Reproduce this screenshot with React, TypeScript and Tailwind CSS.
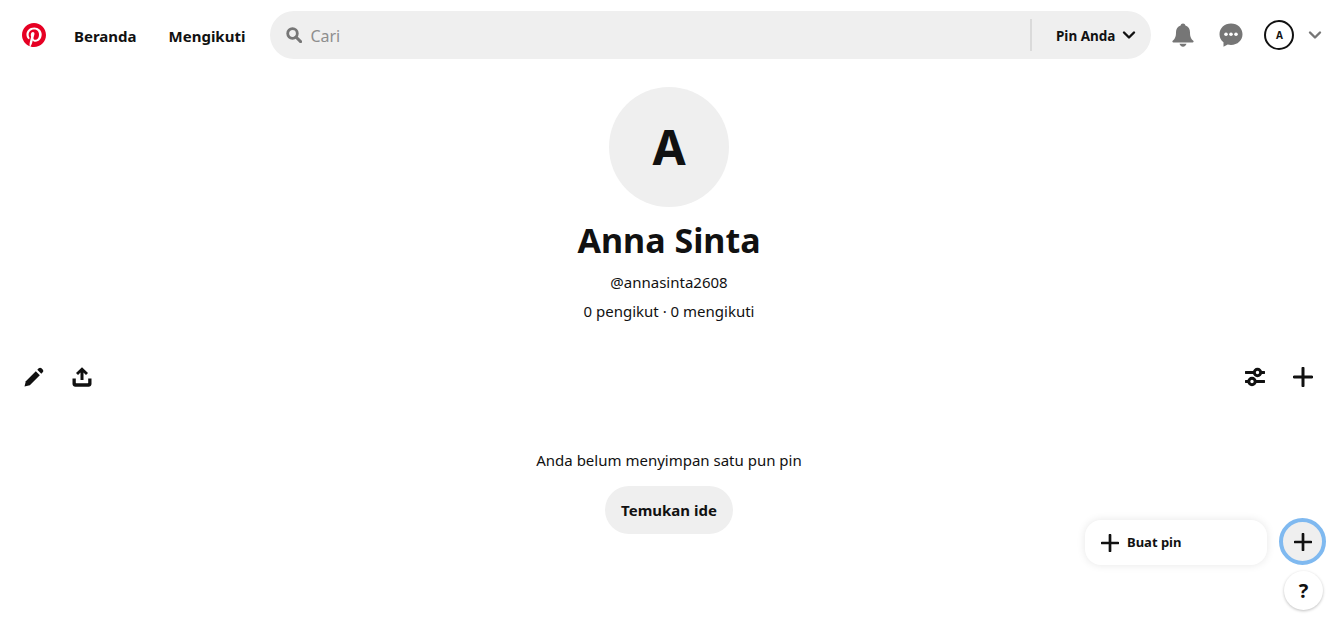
function PinterestLogo() {
    return (
        <svg className="w-6 h-6 shrink-0" viewBox="0 0 24 24" fill="#e60023">
            <path d="M0 12c0 5.123 3.211 9.497 7.73 11.218-.11-.937-.227-2.482.025-3.566.217-.932 1.401-5.938 1.401-5.938s-.357-.715-.357-1.774c0-1.66.962-2.899 2.161-2.899 1.02 0 1.512.765 1.512 1.682 0 1.025-.653 2.557-.99 3.978-.281 1.189.597 2.159 1.769 2.159 2.123 0 3.756-2.239 3.756-5.471 0-2.861-2.056-4.86-4.991-4.86-3.398 0-5.393 2.549-5.393 5.184 0 1.027.395 2.127.889 2.726a.36.36 0 0 1 .083.343c-.091.378-.293 1.189-.332 1.355-.053.218-.173.265-.4.159-1.492-.694-2.424-2.875-2.424-4.627 0-3.769 2.737-7.229 7.892-7.229 4.144 0 7.365 2.953 7.365 6.899 0 4.117-2.595 7.431-6.199 7.431-1.211 0-2.348-.63-2.738-1.373 0 0-.599 2.282-.744 2.84-.282 1.084-1.064 2.456-1.549 3.235C9.584 23.815 10.77 24 12 24c6.627 0 12-5.373 12-12S18.627 0 12 0 0 5.373 0 12" />
        </svg>
    );
}

function SearchIcon() {
    return (
        <svg className="w-4 h-4 shrink-0" viewBox="0 0 16 16" fill="none" stroke="#767676">
            <circle cx="6.5" cy="6.5" r="4.8" strokeWidth="2.8" />
            <path d="M10 10l4.6 4.6" strokeWidth="3" strokeLinecap="round" />
        </svg>
    );
}

function Chevron({ color }: { color: string }) {
    return (
        <svg className="w-[14px] h-[10px] shrink-0" viewBox="0 0 14 10" fill="none" stroke={color}>
            <path d="M2 2.500l5 5 5-5" strokeWidth="2.400" strokeLinecap="round" strokeLinejoin="round" />
        </svg>
    );
}

function BellIcon() {
    return (
        <svg className="w-6 h-6 shrink-0" viewBox="0 0 24 24" fill="#767676">
            <path d="M12 0.500c-1.300 0-2.200.9-2.400 2.100C6.600 3.600 5 6.100 5 9.300c0 4.500-.9 6.300-3.300 8.500-.7.7-.3 1.700.7 1.700h19.200c1 0 1.400-1 .7-1.700C19.900 15.600 19 13.800 19 9.300c0-3.200-1.600-5.700-4.600-6.700C14.200 1.400 13.300.5 12 .5z" />
            <path d="M8.500 20.800h7c-.3 1.500-1.800 2.900-3.500 2.900s-3.200-1.400-3.500-2.900z" />
        </svg>
    );
}

function ChatIcon() {
    return (
        <svg className="w-6 h-6 shrink-0" viewBox="0 0 24 24">
            <path fill="#767676" d="M12 .5C5.400.5.500 5.200.500 11.200c0 3.300 1.500 6.200 4 8.100v4.400l4.200-2.300c1 .3 2.100.5 3.300.5 6.600 0 11.500-4.700 11.500-10.700S18.600.5 12 .5z" />
            <circle cx="7" cy="11.300" r="1.800" fill="#fff" />
            <circle cx="12" cy="11.300" r="1.800" fill="#fff" />
            <circle cx="17" cy="11.300" r="1.800" fill="#fff" />
        </svg>
    );
}

function PencilIcon() {
    return (
        <svg className="w-5 h-5 shrink-0" viewBox="0 0 20 20" fill="#111">
            <path d="M0.500 19.500l1.300-5.300L11.800 4.200l4 4L5.800 18.200z" />
            <path d="M13.300 2.700l1.400-1.400c.8-.8 2-.8 2.800 0l1.200 1.200c.8.8.8 2 0 2.800l-1.400 1.400z" />
        </svg>
    );
}

function ShareIcon() {
    return (
        <svg className="w-5 h-5 shrink-0" viewBox="0 0 20 20" fill="#111">
            <path d="M10 .2l6 5.800-2 2-2.500-2.400v7.400h-3V5.600L6 8 4 6z" />
            <path d="M.500 11.500h3.300v4.300c0 .3.200.5.500.5h11.400c.3 0 .5-.2.500-.5v-4.300h3.300v5.500c0 1.600-1.300 2.800-2.800 2.800H3.300c-1.500 0-2.800-1.200-2.800-2.800z" />
        </svg>
    );
}

function FilterIcon() {
    return (
        <svg className="w-5 h-5 shrink-0" viewBox="0 0 20 20" fill="none" stroke="#111">
            <path d="M0.800 5.500h18.400M0.800 14.500h18.400" strokeWidth="3" strokeLinecap="round" />
            <circle cx="12.500" cy="5.500" r="3.200" fill="#fff" strokeWidth="3" />
            <circle cx="7" cy="14.500" r="3.200" fill="#fff" strokeWidth="3" />
        </svg>
    );
}

function PlusIcon({ size }: { size: string }) {
    return (
        <svg className={size} viewBox="0 0 20 20" fill="none" stroke="#111">
            <path d="M10 1.200v17.600M1.200 10h17.600" strokeWidth="3" strokeLinecap="round" />
        </svg>
    );
}

export default function App() {
    return (
        <div className="relative w-[1338px] h-[622px] bg-white text-[#111] font-['Noto_Sans','Open_Sans',sans-serif] overflow-hidden">
            {/* Header */}
            <header className="flex items-center h-[70px] pl-[22px]">
                <PinterestLogo />
                <nav className="flex items-center ml-[28px] gap-8 pt-[2px] text-[15px] font-bold">
                    <span>Beranda</span>
                    <span>Mengikuti</span>
                </nav>
                <div className="flex items-center shrink-0 ml-[25px] w-[881px] h-12 rounded-3xl bg-[#efefef] pl-4 pr-[15px]">
                    <SearchIcon />
                    <span className="ml-2 pt-px text-[16px] text-[#8e8e8e]">Cari</span>
                    <div className="ml-auto flex items-center h-8 border-l-2 border-[#dadada] pl-6 gap-[7px] text-[13.5px] font-bold">
                        <span className="pt-[2px]">Pin Anda</span>
                        <Chevron color="#111" />
                    </div>
                </div>
                <div className="flex items-center ml-5 gap-6">
                    <BellIcon />
                    <ChatIcon />
                    <div className="flex items-center justify-center -ml-[3px] w-[30px] h-[30px] rounded-full border-2 border-[#111] text-[10px] font-bold">A</div>
                </div>
                <div className="ml-[14px]">
                    <Chevron color="#767676" />
                </div>
            </header>

            {/* Profile */}
            <section className="flex flex-col items-center pt-[17px]">
                <div className="flex items-center justify-center w-[120px] h-[120px] rounded-full bg-[#efefef] text-[48px] font-bold leading-none">A</div>
                <h1 className="mt-[9px] text-[34px] leading-[48px] font-bold">Anna Sinta</h1>
                <p className="mt-[6px] text-[15px] leading-[24px]">@annasinta2608</p>
                <p className="mt-[5px] text-[15px] leading-[24px]">0 pengikut · 0 mengikuti</p>
            </section>

            {/* Toolbar */}
            <div className="flex items-center justify-between mt-[44px] pl-[24px] pr-[25px]">
                <div className="flex items-center gap-7">
                    <PencilIcon />
                    <ShareIcon />
                </div>
                <div className="flex items-center gap-7">
                    <FilterIcon />
                    <PlusIcon size="w-5 h-5" />
                </div>
            </div>

            {/* Empty state */}
            <section className="flex flex-col items-center mt-[61px]">
                <p className="text-[15px] leading-[24px]">Anda belum menyimpan satu pun pin</p>
                <button className="mt-[14px] h-12 px-4 pt-px rounded-3xl bg-[#efefef] text-[15px] font-bold">Temukan ide</button>
            </section>

            {/* Floating */}
            <div className="absolute left-[1085px] top-[520px] flex items-center w-[182px] h-[45px] pl-4 gap-2 rounded-2xl bg-white shadow-[0_0_8px_rgba(0,0,0,0.1)]">
                <PlusIcon size="w-[18px] h-[18px]" />
                <span className="pt-px text-[13px] font-bold">Buat pin</span>
            </div>
            <div className="absolute left-[1279px] top-[518px] flex items-center justify-center w-[47px] h-[47px] rounded-full border-4 border-[#7fb9f0] bg-[#efefef]">
                <PlusIcon size="w-[18px] h-[18px]" />
            </div>
            <div className="absolute left-[1284px] top-[571px] flex items-center justify-center w-[39px] h-[39px] rounded-full bg-white shadow-[0_1px_3px_rgba(0,0,0,0.25)] text-[20px] font-bold">?</div>
        </div>
    );
}
